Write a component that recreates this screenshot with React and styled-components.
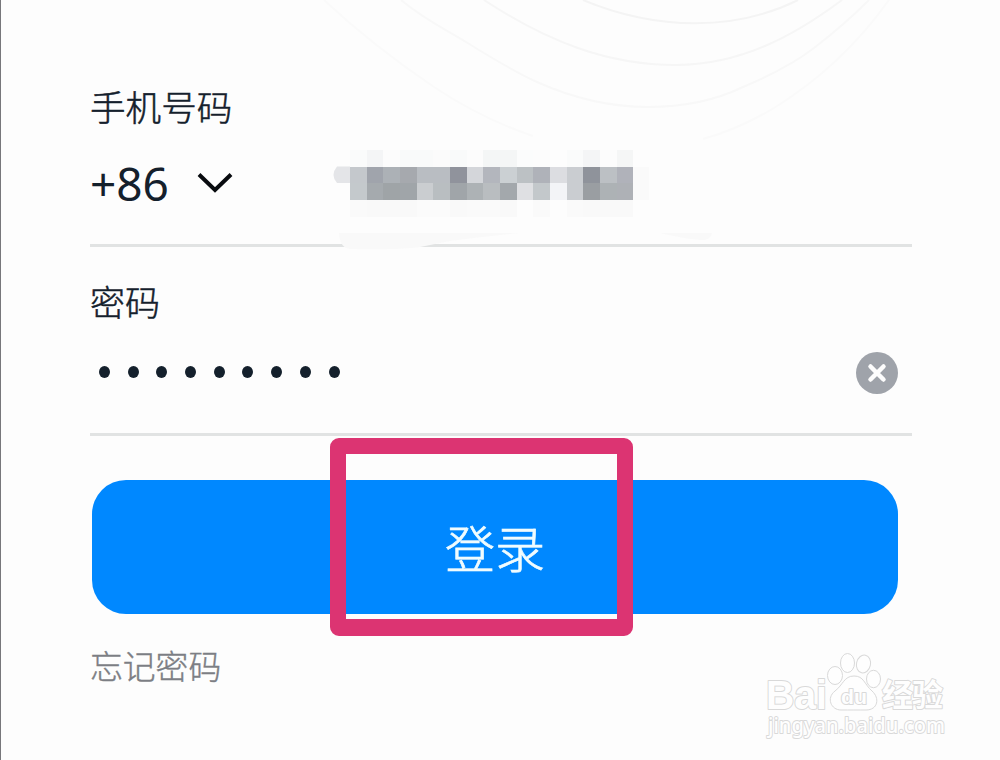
import React from "react";
import styled, { createGlobalStyle } from "styled-components";

const GlobalStyle = createGlobalStyle`
  * { box-sizing: border-box; }
  body { margin: 0; background: #fdfdfd; overflow: hidden; }
`;

const Screen = styled.main`
  position: relative;
  width: 1000px;
  height: 760px;
  padding: 82px 88px 0 89px;
  border-left: 1px solid #77777b;
  background: #fdfdfd;
  color: #14202c;
  font-family: "Noto Sans CJK SC", sans-serif;
  font-weight: 300;
  overflow: hidden;
`;

const Overlay = styled.svg`
  position: absolute;
  left: -1px;
  top: 0;
  pointer-events: none;
`;

const Form = styled.form`
  position: relative;
  display: flex;
  flex-direction: column;
`;

const Field = styled.section`
  display: flex;
  flex-direction: column;
  height: ${(p) => p.$height}px;
  padding-top: ${(p) => p.$top}px;
  border-bottom: 3px solid #e1e3e3;
`;

const Label = styled.label`
  height: 48px;
  line-height: 48px;
  font-size: ${(p) => p.$size}px;
  white-space: nowrap;
  -webkit-text-stroke: 0.5px #14202c;
`;

const PhoneRow = styled.div`
  display: flex;
  align-items: center;
  height: 68px;
  margin-top: 19px;
`;

const CountryCode = styled.span`
  width: 107px;
  padding-bottom: 1px;
  font: 400 46px/68px "Noto Sans", sans-serif;
`;

const PasswordRow = styled.div`
  display: flex;
  align-items: center;
  justify-content: space-between;
  height: 44px;
  margin-top: 26px;
  padding: 0 14px 0 9px;
`;

const Dots = styled.div`
  display: flex;
  gap: 17.7px;
  padding-bottom: 2px;
`;

const Dot = styled.i`
  width: 11px;
  height: 12px;
  border-radius: 50%;
  background: #14202c;
`;

const LoginButton = styled.button`
  width: 806px;
  height: 134px;
  margin: 44px 0 0 2px;
  padding: 0 0 3px;
  border: 0;
  border-radius: 34px;
  background: #0088ff;
  color: #f0fcff;
  font: 300 50px/1 "Noto Sans CJK SC", sans-serif;
  -webkit-text-stroke: 0.7px #f0fcff;
`;

const Forgot = styled.a`
  margin-top: 27px;
  font-size: 32.8px;
  line-height: 48px;
  color: #7c7e84;
  -webkit-text-stroke: 0.4px #7c7e84;
`;

const Highlight = styled.div`
  position: absolute;
  left: 329px;
  top: 438px;
  width: 303px;
  height: 198px;
  border: 16px solid #dc3472;
  border-bottom-width: 17px;
  border-radius: 9px;
`;

const Watermark = styled.svg`
  position: absolute;
  left: 759px;
  top: 640px;

  text { paint-order: stroke; stroke-linejoin: round; }
`;

const cell = 50 / 3;
const mosaic = [
  { y: 150, h: 16.5, colors: ["#fafbfb","#f4f5f6","#fcfcfc","#f9fafa","#f9fafa","#fbfbfb","#f9fafa","#fcfcfc","#f4f6f6","#f4f6f6","#fbfcfc","#fcfcfc","#fdfdfd","#fafbfb","#f4f5f6","#fcfcfc","#f5f6f6"] },
  { y: 166.5, h: 16.5, colors: ["#c4c8cc","#a0a4ac","#acb1b6","#a6a9ae","#b9bdc2","#b9bdc2","#90939c","#d4d6da","#b3b6bd","#cbd0d3","#bcc1c4","#afb2b9","#dcdde1","#cacdd1","#8f939b","#bcc0c4","#b0b2ba"] },
  { y: 183, h: 17, colors: ["#c4c9cc","#a5aaae","#9fa4a7","#a0a5a9","#cacdd0","#b9bec1","#a0a5a9","#adb2b5","#b9bdc0","#a3a8ac","#dfe0e3","#c3c8cb","#f3f4f7","#cacdd1","#9a9ea2","#adb2b5","#aeb1b6"] },
  { y: 200, h: 16.5, colors: ["#fafafa","#f9f9f9","#f9f9f9","#f9f9f9","#fbfbfb","#fbfbfb","#f9f9f9","#fafafa","#fafafa","#f9f9f9","#fdfdfd","#fafafa","#fdfdfd","#fafafa","#f9f9f9","#f9f9f9","#f9f9f9"] },
];

function Backdrop() {
  return (
    <Overlay width="1000" height="260" viewBox="0 0 1000 260" fill="none">
      <g strokeWidth="2">
        <path stroke="#f4f4f4" d="M583 0Q638 23 695 23.3Q752 23 798 0" />
        <path stroke="#f6f6f6" d="M484 0C548 42 608 65 676 65C740 65 794 36 842 0" />
        <path stroke="#f8f8f8" d="M401 0C425 20 445 29 466 42C490 57 513 71 537 82C575 99 609 107 648 107C682 107 714 101 743 87C769 76 792 65 814 48Q845 24 869 0" />
        <path stroke="#fafafa" d="M324 0Q372 45 434 87Q482 119 533 136M703 139Q739 129 774 108Q842 66 889 0" />
      </g>
    </Overlay>
  );
}

function HiddenNumber() {
  return (
    <Overlay width="1000" height="260" viewBox="0 0 1000 260">
      <path fill="#f9f9f9" d="M339 233H520Q480 237 450 241L420 247Q400 250 350 249Q340 248 339 233Z" />
      <path fill="#f9f9f9" d="M660 233H712Q711 239 704 240Q690 240 660 233Z" />
      <path fill="#e4e5e8" d="M337 166.5H350V183H337Q330 175 337 166.5Z" />
      <g shapeRendering="crispEdges">
        <rect x="633.3" y="167" width="16" height="33" fill="#fafafa" />
        {mosaic.map((row) =>
          row.colors.map((fill, i) => (
            <rect key={`${row.y}-${i}`} x={350 + i * cell} y={row.y} width={cell} height={row.h} fill={fill} />
          ))
        )}
      </g>
    </Overlay>
  );
}

function BrandMark() {
  return (
    <Watermark width="210" height="110" viewBox="0 0 210 110" fill="#fefefe" stroke="#d9d9d9" strokeWidth="1">
      <ellipse cx="75" cy="35.5" rx="7.5" ry="9" />
      <ellipse cx="87.5" cy="23" rx="7" ry="9.5" />
      <ellipse cx="103.5" cy="24" rx="7" ry="9" transform="rotate(12 103.5 24)" />
      <ellipse cx="113.5" cy="39" rx="7" ry="8.7" />
      <path d="M94 36C84 36 83 45 75 51C66 58 71 70 81 70C89 70 99 70 106 70C118 70 120 58 112 51C104 44 104 36 94 36Z" />
      <g fontFamily="Liberation Sans, sans-serif" fontWeight="700" strokeWidth="2">
        <text x="6" y="68.5" fontSize="41" textLength="61" lengthAdjust="spacingAndGlyphs">Bai</text>
        <text x="81" y="64" fontSize="20" textLength="26" lengthAdjust="spacingAndGlyphs">du</text>
      </g>
      <text x="122" y="66" fontSize="31" fontWeight="700" strokeWidth="2" fontFamily="Noto Sans CJK SC, sans-serif" textLength="61">经验</text>
      <text x="8" y="92.5" fontSize="22" fontWeight="500" strokeWidth="2" fontFamily="Noto Sans, sans-serif" textLength="177" lengthAdjust="spacingAndGlyphs">jingyan.baidu.com</text>
    </Watermark>
  );
}

export default function App() {
  return (
    <>
      <GlobalStyle />
      <Screen>
        <Backdrop />
        <Form>
          <Field $height={165} $top={0}>
            <Label $size={35.6}>手机号码</Label>
            <PhoneRow>
              <CountryCode>+86</CountryCode>
              <svg width="36" height="24" viewBox="0 0 36 24" fill="none" stroke="#080b0f" strokeWidth="4" strokeLinecap="butt" strokeLinejoin="miter">
                <path d="M2 3.5L18 19L34 3.5" />
              </svg>
            </PhoneRow>
          </Field>
          <Field $height={189} $top={30}>
            <Label $size={35}>密码</Label>
            <PasswordRow>
              <Dots>{Array.from({ length: 9 }, (_, i) => <Dot key={i} />)}</Dots>
              <svg width="42" height="42" viewBox="0 0 42 42">
                <circle cx="21" cy="21" r="21" fill="#9fa3aa" />
                <path d="M14.5 14.5L27.5 27.5M27.5 14.5L14.5 27.5" stroke="#fdfdfd" strokeWidth="4.5" strokeLinecap="round" />
              </svg>
            </PasswordRow>
          </Field>
          <LoginButton type="button">登录</LoginButton>
          <Forgot>忘记密码</Forgot>
        </Form>
        <HiddenNumber />
        <Highlight />
        <BrandMark />
      </Screen>
    </>
  );
}
